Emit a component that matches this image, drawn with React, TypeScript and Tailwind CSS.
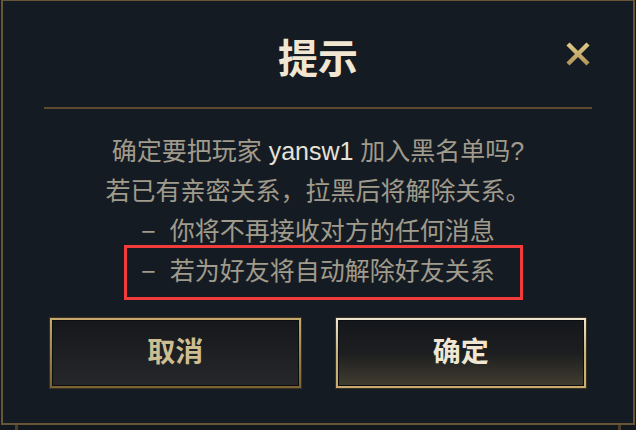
const font = { fontFamily: '"Liberation Sans", "Noto Sans CJK SC", sans-serif' };

function CloseIcon() {
  return (
    <svg width="28" height="28" viewBox="0 0 28 28" fill="none">
      <defs>
        <linearGradient id="xg" x1="0" y1="0" x2="0" y2="1">
          <stop offset="0" stopColor="#e0c887" />
          <stop offset="1" stopColor="#b39758" />
        </linearGradient>
      </defs>
      <path d="M4 4 L24 24 M24 4 L4 24" stroke="url(#xg)" strokeWidth="4.4" strokeLinecap="butt" />
    </svg>
  );
}

export default function App() {
  return (
    <div className="relative w-[636px] h-[430px] bg-[#12171d] overflow-hidden" style={font}>
      <div className="ml-px w-[634px] h-[425px] bg-[#151b23] border-x-2 border-b-2 border-t border-[#665637] flex flex-col">
        {/* header */}
        <div className="mx-[41px] h-[106px] grid grid-cols-[1fr_auto_1fr]">
          <div />
          <h1 className="pt-[36px] text-[40px] leading-[44px] font-bold text-[#f0e6d2]">提示</h1>
          <div className="flex justify-end pt-[39px]">
            <CloseIcon />
          </div>
        </div>
        <div className="mx-[41px] h-[2px] bg-[#5b4a2d]" />

        {/* message */}
        <div className="mt-[22px] flex flex-col items-center text-[25px] leading-[40px] text-[#a09b8c]">
          <p>
            确定要把玩家 <span className="text-[#e6e2d8]">yansw1</span> 加入黑名单吗?
          </p>
          <p>若已有亲密关系，拉黑后将解除关系。</p>
          <p>{"\u2212\u00a0\u00a0"}你将不再接收对方的任何消息</p>
          <p>{"\u2212\u00a0\u00a0"}若为好友将自动解除好友关系</p>
        </div>

        {/* buttons */}
        <div className="mt-[27px] px-[47px] flex gap-[35px]">
          <button className="flex-1 h-[70px] p-[2px] bg-linear-to-b from-[#c8aa6e] to-[#7a6232] shadow-[0_0_0_1px_#3b3322]">
            <div className="h-full border border-[#0b0d10] bg-linear-to-b from-[#16181b] to-[#25272a] flex items-center justify-center text-[28px] font-bold text-[#cdbe91]">
              取消
            </div>
          </button>
          <button className="flex-1 h-[70px] p-[2px] bg-linear-to-b from-[#f0e6d2] via-[#c8b47e] to-[#c8aa6e] shadow-[0_0_0_1px_#3b3322]">
            <div className="h-full border border-[#0b0d10] bg-linear-to-b from-[#14171b] via-[#1d1e20] to-[#403c2f] flex items-center justify-center text-[28px] font-bold text-[#f0e6d2]">
              确定
            </div>
          </button>
        </div>
      </div>
      <div className="flex justify-between px-[15px]">
        <div className="w-[3px] h-[5px] bg-[#4a3f2a]" />
        <div className="w-[3px] h-[5px] bg-[#4a3f2a]" />
      </div>

      {/* annotation overlay */}
      <div className="absolute left-[124px] top-[245px] w-[399px] h-[55px] border-[3px] border-[#f23b3b]" />
    </div>
  );
}
